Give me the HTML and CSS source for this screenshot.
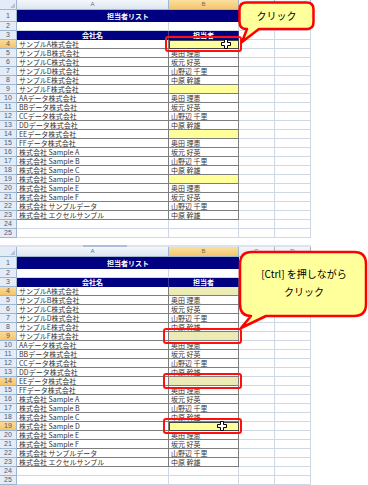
FILE: index.html
```html
<!DOCTYPE html>
<html>

<head>
    <meta charset="utf-8">
    <title>担当者リスト</title>
    <link rel="stylesheet" href="styles.css">
</head>

<body>
    <div class="page">
        <!-- first shot: single click -->
        <div class="sheet" id="sheet-one">
            <div class="grid"></div>
            <div class="mark mark-a"></div>
            <svg class="cursor cursor-a" width="10" height="10" viewBox="0 0 10 10">
                <path d="M3.5 0.5H6.5V3.5H9.5V6.5H6.5V9.5H3.5V6.5H0.5V3.5H3.5Z" fill="#fff" stroke="#000" stroke-width="1" />
            </svg>
            <div class="callout callout-a">
                <svg class="bubble" width="77" height="43" viewBox="0 0 77 43">
                    <path d="M8.5 1.5H68.5Q75.5 1.5 75.5 8.5V21Q75.5 28 68.5 28H21L4 41L9 28H8.5Q1.5 28 1.5 21V8.5Q1.5 1.5 8.5 1.5Z" />
                </svg>
                <div class="callout-text">
                    <span>クリック</span>
                </div>
            </div>
        </div>

        <div class="sheet-edge"><span></span></div>

        <!-- second shot: ctrl + click -->
        <div class="sheet" id="sheet-two">
            <div class="grid"></div>
            <div class="mark mark-b1"></div>
            <div class="mark mark-b2"></div>
            <div class="mark mark-b3"></div>
            <svg class="cursor cursor-b" width="10" height="10" viewBox="0 0 10 10">
                <path d="M3.5 0.5H6.5V3.5H9.5V6.5H6.5V9.5H3.5V6.5H0.5V3.5H3.5Z" fill="#fff" stroke="#000" stroke-width="1" />
            </svg>
            <div class="callout callout-b">
                <svg class="bubble" width="130" height="80" viewBox="0 0 130 80">
                    <path d="M14 2H116Q128 2 128 14V54Q128 66 116 66H28L3 78L13 66Q2 66 2 54V14Q2 2 14 2Z" />
                </svg>
                <div class="callout-text">
                    <span>[Ctrl] を押しながら</span>
                    <span>クリック</span>
                </div>
            </div>
        </div>
    </div>

    <script>
        const companies = [
            'サンプルA株式会社', 'サンプルB株式会社', 'サンプルC株式会社', 'サンプルD株式会社',
            'サンプルE株式会社', 'サンプルF株式会社', 'AAデータ株式会社', 'BBデータ株式会社',
            'CCデータ株式会社', 'DDデータ株式会社', 'EEデータ株式会社', 'FFデータ株式会社',
            '株式会社 Sample A', '株式会社 Sample B', '株式会社 Sample C', '株式会社 Sample D',
            '株式会社 Sample E', '株式会社 Sample F', '株式会社 サンプルデータ', '株式会社 エクセルサンプル'
        ];
        const people = ['', '奥田 理恵', '坂元 好英', '山野辺 千里', '中原 幹雄'];

        function cell(grid, cls, text) {
            const d = document.createElement('div');
            d.className = cls;
            if (text) d.textContent = text;
            grid.appendChild(d);
        }

        // Build one worksheet grid (rows 1-25, columns A-D)
        function buildSheet(id, picked, active) {
            const grid = document.querySelector('#' + id + ' .grid');
            cell(grid, 'corner');
            ['A', 'B', 'C', 'D'].forEach(l => cell(grid, l === 'B' ? 'col-head sel' : 'col-head', l));

            for (let r = 1; r <= 25; r++) {
                const sel = picked.includes(r);
                let head = sel ? 'row-head sel' : 'row-head';
                if (r === 1) head += ' tall';
                cell(grid, head, String(r));

                if (r === 1) {
                    cell(grid, 'title', '担当者リスト');
                } else if (r === 3) {
                    cell(grid, 'thead', '会社名');
                    cell(grid, 'thead', '担当者');
                } else if (r >= 4 && r <= 23) {
                    const i = r - 4;
                    cell(grid, 'tcell', companies[i]);
                    let cls = 'tcell';
                    if (i % 5 === 0) {
                        cls += r === active ? ' active' : (sel ? ' picked' : ' blank');
                    }
                    cell(grid, cls, people[i % 5]);
                } else {
                    cell(grid, 'cell');
                    cell(grid, 'cell');
                }
                cell(grid, 'cell');
                cell(grid, 'cell');
            }
        }

        buildSheet('sheet-one', [4], 4);
        buildSheet('sheet-two', [4, 9, 14, 19], 19);
    </script>
</body>

</html>
```

FILE: styles.css
```css
/* Basic page */
body {
    margin: 0;
    background: #fff;
    font-family: "Noto Sans CJK JP", sans-serif;
    color: #000;
}

.page {
    display: flex;
    flex-direction: column;
    width: 368px;
}

.sheet {
    position: relative;
}

/* Worksheet grid */
.grid {
    display: grid;
    grid-template-columns: 17px 152px 70px 36px 36px;
    grid-template-rows: 10px 12px repeat(24, 9px);
    width: 311px;
}

.grid > div {
    box-sizing: border-box;
    white-space: nowrap;
}

.corner {
    background: #e4ecf7;
    border-right: 1px solid #9eb6ce;
    border-bottom: 1px solid #9eb6ce;
    position: relative;
}

.corner::after {
    content: "";
    position: absolute;
    right: 1px;
    bottom: 1px;
    border-left: 5px solid transparent;
    border-bottom: 5px solid #b4c4d8;
}

.col-head {
    background: linear-gradient(#f4f7fb, #dde5ef);
    border-right: 1px solid #9eb6ce;
    border-bottom: 1px solid #9eb6ce;
    font-family: "Liberation Sans", sans-serif;
    font-size: 6px;
    line-height: 9px;
    text-align: center;
    color: #5a6f8c;
}

.col-head.sel {
    background: linear-gradient(#fbdf9f, #f4c66c);
    color: #7a6a4a;
}

.row-head {
    background: #e4ecf7;
    border-right: 1px solid #9eb6ce;
    border-bottom: 1px solid #9eb6ce;
    font-family: "Liberation Sans", sans-serif;
    font-size: 7px;
    line-height: 8px;
    text-align: center;
    color: #4a5d78;
}

.row-head.tall {
    line-height: 11px;
}

.row-head.sel {
    background: linear-gradient(#fbdb98, #f5c468);
}

.cell {
    border-right: 1px solid #d0d7e5;
    border-bottom: 1px solid #d0d7e5;
}

/* List table */
.title {
    grid-column: span 2;
    background: #000080;
    color: #fff;
    font-size: 7px;
    font-weight: bold;
    line-height: 12px;
    text-align: center;
}

.thead {
    background: #000080;
    border-right: 1px solid #3a3a8a;
    color: #fff;
    font-size: 7px;
    font-weight: bold;
    line-height: 9px;
    text-align: center;
}

.tcell {
    border-right: 1px solid #7d7d7d;
    border-bottom: 1px solid #7d7d7d;
    font-size: 7px;
    line-height: 8px;
    padding-left: 2px;
    color: #333;
}

.tcell.blank,
.tcell.active {
    background: #ffff99;
}

.tcell.active {
    outline: 1px solid #444;
    outline-offset: -1px;
}

.tcell.picked {
    background: #ecebb6;
}

/* Edge between the two shots */
.sheet-edge {
    display: flex;
    margin-top: 7px;
    width: 311px;
    height: 2px;
    background: #dbe3ee;
}

.sheet-edge span {
    margin-left: 83px;
    width: 44px;
    background: #a9bfdc;
}

/* Red selection marks */
.mark {
    position: absolute;
    box-sizing: border-box;
    border: 2.5px solid #ff1010;
    border-radius: 3px;
    height: 16px;
}

.mark-a {
    left: 165px;
    top: 36px;
    width: 77px;
}

.mark-b1,
.mark-b2,
.mark-b3 {
    left: 163px;
    width: 79px;
}

.mark-b1 {
    top: 81px;
}

.mark-b2 {
    top: 126px;
}

.mark-b3 {
    top: 171px;
}

.cursor {
    position: absolute;
}

.cursor-a {
    left: 221px;
    top: 39px;
}

.cursor-b {
    left: 217px;
    top: 174px;
}

/* Speech bubbles */
.callout {
    position: absolute;
}

.bubble {
    position: absolute;
    left: 0;
    top: 0;
}

.bubble path {
    fill: #ffff9c;
    stroke: #ff0000;
    stroke-width: 2.5;
    stroke-linejoin: round;
}

.callout-text {
    position: relative;
    display: flex;
    flex-direction: column;
    align-items: center;
    justify-content: center;
    font-size: 10px;
    line-height: 18px;
    color: #000;
}

.callout-a {
    left: 238px;
    top: 1px;
    width: 77px;
    height: 43px;
}

.callout-a .callout-text {
    height: 29px;
}

.callout-b {
    left: 238px;
    top: 3px;
    width: 130px;
    height: 80px;
}

.callout-b .callout-text {
    height: 66px;
    padding-left: 2px;
}
```
